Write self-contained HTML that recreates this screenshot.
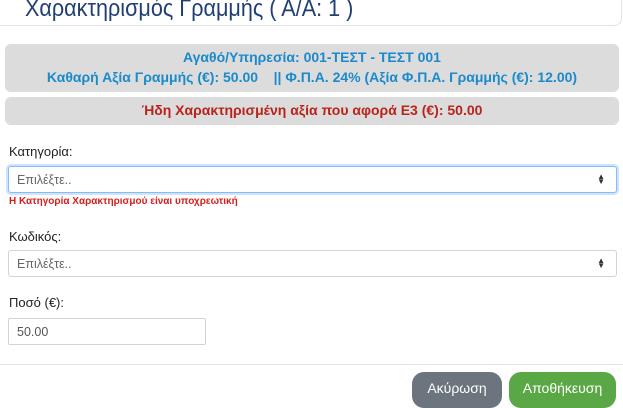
<!DOCTYPE html>
<html><head><meta charset="utf-8"><style>
*{box-sizing:border-box;margin:0;padding:0}
body{width:623px;height:406px;overflow:hidden;background:#fff;font-family:"Liberation Sans",sans-serif;position:relative}
.hdr{position:absolute;left:-10px;top:-20px;width:632px;height:46px;border:1px solid #e3e3e3;border-radius:0 0 8px 8px;border-top:none}
.title{position:absolute;left:25px;top:-5px;font-size:24px;color:#213f73;white-space:nowrap;transform:scaleX(0.9);transform-origin:0 0}
.box{position:absolute;left:5px;width:614px;background:#dcdcdc;border-radius:6px;text-align:center;font-weight:bold;font-size:14px;white-space:nowrap}
.b1{top:44px;height:48px;color:#1b8acb;padding-top:3px;line-height:20px}
.b2{top:97px;height:28px;color:#b8231b;line-height:26px}
.lbl{position:absolute;left:9px;font-size:13px;color:#222}
.sel{position:absolute;left:8px;width:609px;height:27px;border:1px solid #ced4da;border-radius:3px;font-size:12.5px;color:#666;padding:6px 0 0 8px}
.sel.f{border-color:#80bdff;box-shadow:0 0 0 2px #cfe3fb}
.arr{position:absolute;right:11px;top:7px;font-size:8px;line-height:5px;color:#333}
.err{position:absolute;left:9px;top:196px;font-size:10px;font-weight:bold;color:#d3201f}
.inp{position:absolute;left:8px;top:318px;width:198px;height:27px;border:1px solid #ced4da;border-radius:2px;font-size:12.5px;color:#555;padding:6px 0 0 8px}
.hr{position:absolute;left:0;top:364px;width:623px;border-top:1px solid #e3e3e3}
.btn{position:absolute;top:372px;height:36px;border-radius:12px;color:#fff;font-size:14px;text-align:center;line-height:33px}
</style></head><body>
<div class="hdr"></div>
<div class="title">Χαρακτηρισμός Γραμμής ( Α/Α: 1 )</div>
<div class="box b1">Αγαθό/Υπηρεσία: 001-ΤΕΣΤ - ΤΕΣΤ 001<br>Καθαρή Αξία Γραμμής (€): 50.00 &nbsp;&nbsp; || Φ.Π.Α. 24% (Αξία Φ.Π.Α. Γραμμής (€): 12.00)</div>
<div class="box b2">Ήδη Χαρακτηρισμένη αξία που αφορά Ε3 (€): 50.00</div>
<div class="lbl" style="top:144px">Κατηγορία:</div>
<div class="sel f" style="top:166px">Επιλέξτε..<div class="arr">▲<br>▼</div></div>
<div class="err">Η Κατηγορία Χαρακτηρισμού είναι υποχρεωτική</div>
<div class="lbl" style="top:229px">Κωδικός:</div>
<div class="sel" style="top:250px">Επιλέξτε..<div class="arr">▲<br>▼</div></div>
<div class="lbl" style="top:295px">Ποσό (€):</div>
<div class="inp">50.00</div>
<div class="hr"></div>
<div class="btn" style="left:412px;width:90px;background:#6c757d">Ακύρωση</div>
<div class="btn" style="left:509px;width:107px;background:#5aa845">Αποθήκευση</div>
</body></html>
